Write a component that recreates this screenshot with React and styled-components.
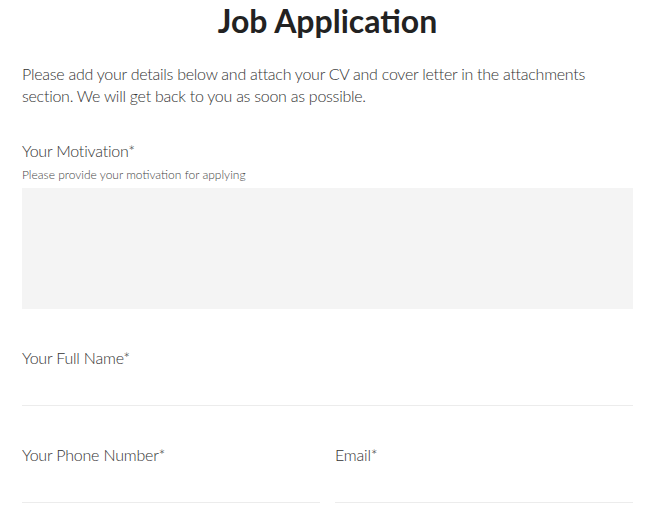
import React from 'react';
import styled, { createGlobalStyle } from 'styled-components';

const GlobalStyle = createGlobalStyle`
    body {
        margin: 0;
        background: #fff;
        font-family: Lato, "Open Sans", sans-serif;
        color: #333;
    }
`;

const Page = styled.div`
    width: 611px;
    margin-left: 22px;
`;

const Title = styled.h1`
    margin: 0;
    padding-top: 2px;
    font-size: 32px;
    font-weight: 700;
    line-height: 38px;
    color: #222;
    text-align: center;
`;

const Intro = styled.p`
    margin: 23px 0 0;
    font-size: 16px;
    font-weight: 300;
    line-height: 22px;
    letter-spacing: -0.26px;
    color: #333;
`;

const Field = styled.div`
    display: flex;
    flex-direction: column;
    margin-top: ${props => props.top}px;
`;

const Label = styled.label`
    font-size: 16px;
    font-weight: 300;
    line-height: 20px;
    letter-spacing: -0.2px;
    color: #333;
`;

const Hint = styled.span`
    margin-top: 6px;
    font-size: 12px;
    font-weight: 300;
    line-height: 16px;
    color: #444;
`;

const TextArea = styled.textarea`
    margin-top: 5px;
    height: 121px;
    border: none;
    background: #f4f4f4;
    resize: none;
    outline: none;
    box-sizing: border-box;
    font-family: inherit;
`;

const Input = styled.input`
    margin-top: 17px;
    height: 20px;
    border: none;
    border-bottom: 1px solid #ececec;
    outline: none;
    background: transparent;
    padding: 0;
    font-family: inherit;
`;

const Row = styled.div`
    display: grid;
    grid-template-columns: 298px 298px;
    column-gap: 15px;
`;

export default function App() {
    return (
        <>
            <GlobalStyle />
            <Page>
                <Title>Job Application</Title>
                <Intro>
                    Please add your details below and attach your CV and cover letter in the attachments
                    section. We will get back to you as soon as possible.
                </Intro>
                <Field top={34}>
                    <Label>Your Motivation*</Label>
                    <Hint>Please provide your motivation for applying</Hint>
                    <TextArea />
                </Field>
                <Field top={39}>
                    <Label>Your Full Name*</Label>
                    <Input type="text" />
                </Field>
                <Row>
                    <Field top={39}>
                        <Label>Your Phone Number*</Label>
                        <Input type="tel" />
                    </Field>
                    <Field top={39}>
                        <Label>Email*</Label>
                        <Input type="email" />
                    </Field>
                </Row>
            </Page>
        </>
    );
}
